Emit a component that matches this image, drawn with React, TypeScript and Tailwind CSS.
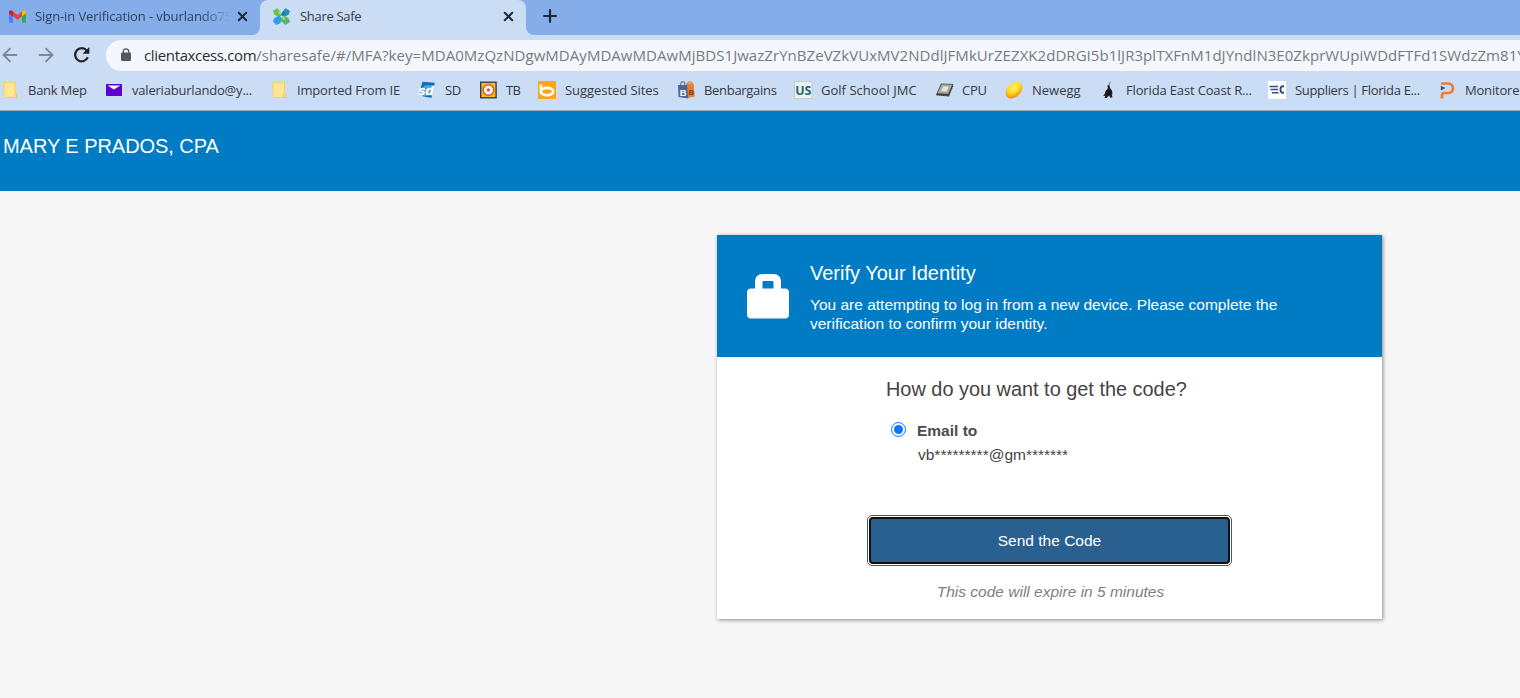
import React from 'react';
import { ArrowLeft, ArrowRight, Plus, X } from 'lucide-react';

const FolderIcon = () => (
  <svg width="18" height="18" viewBox="0 0 18 18">
    <path d="M3 1.5h11.5v11l1.200.6v3.400H3z" fill="#ffe694" stroke="#f3cf63" strokeWidth="0.9" />
    <path d="M13.400 16.400v-3l2.200-.2v3.200z" fill="#fff1b8" stroke="#eabb40" strokeWidth="0.8" />
  </svg>
);

const MailIcon = () => (
  <svg width="18" height="18" viewBox="0 0 18 18">
    <rect x="1" y="3" width="16" height="12" rx="0.8" fill="#5f01d1" />
    <path d="M2.600 4.600h12.800L9 8.600z" fill="#fff" />
  </svg>
);

const SdIcon = () => (
  <svg width="18" height="18" viewBox="0 0 18 18">
    <path d="M4.500 0.800l12.300 1-3.300 15-7.500-1L1 13z" fill="#0870bd" />
    <path d="M1 11l5.500-6.500 8-.5-1.500 9-6 2.500L1 14.500z" fill="#fff" fillOpacity="0.350" />
    <text x="0" y="13.500" fontSize="13.500" fontWeight="bold" fontStyle="italic" fill="#fff" stroke="#fff" strokeWidth="0.300" fontFamily="Liberation Sans, sans-serif" textLength="15.500" lengthAdjust="spacingAndGlyphs">sd</text>
  </svg>
);

const TbIcon = () => (
  <svg width="18" height="18" viewBox="0 0 18 18">
    <rect x="1.700" y="1.200" width="15.400" height="15.600" fill="#f9bd10" stroke="#263466" strokeWidth="1.300" />
    <circle cx="9.400" cy="9" r="5.300" fill="#fff" stroke="#e5532d" strokeWidth="1.500" />
    <circle cx="9.400" cy="9" r="1.700" fill="#e5532d" />
  </svg>
);

const BingIcon = () => (
  <svg width="18" height="18" viewBox="0 0 18 18">
    <rect width="18" height="18" fill="#fda51c" />
    <path d="M2.900 3.600v7" stroke="#fff" strokeWidth="2.600" />
    <ellipse cx="9" cy="10.500" rx="6.200" ry="3.600" fill="none" stroke="#fff" strokeWidth="2.600" />
  </svg>
);

const BagsIcon = () => (
  <svg width="18" height="18" viewBox="0 0 18 18">
    <path d="M10.500 3c0-3 4.500-3 4.500 0" fill="none" stroke="#d98143" strokeWidth="1.200" />
    <path d="M9 2.500h7.500l1.300 13L10 17z" fill="#ef7c2d" />
    <path d="M3.500 4.500c0-5 4.500-5 4.500 0" fill="none" stroke="#6b82ad" strokeWidth="1.300" />
    <path d="M1 4h9l1.300 13.500L1.500 16z" fill="#4a6598" />
    <text x="2.800" y="14.500" fontSize="9.500" fontWeight="bold" fill="#fff" fontFamily="Liberation Sans, sans-serif">B</text>
    <text x="11.500" y="13.500" fontSize="7.500" fontWeight="bold" fill="#743b2c" fontFamily="Liberation Sans, sans-serif">B</text>
  </svg>
);

const UsIcon = () => (
  <svg width="19" height="18" viewBox="0 0 19 18">
    <rect x="0.500" y="0.500" width="17.500" height="17" fill="#eef0ec" stroke="#b9cfd3" />
    <text x="1.200" y="14.200" fontSize="13" fontWeight="bold" fill="#1f6577" fontFamily="Open Sans, sans-serif" textLength="16.200" lengthAdjust="spacingAndGlyphs">US</text>
  </svg>
);

const CpuIcon = () => (
  <svg width="19" height="18" viewBox="0 0 19 18">
    <path d="M6 2.500l12.500.6-4.500 12.400L.8 14.200z" fill="#4c5148" />
    <path d="M6.800 3.200l10.500.6-4 9-10.800-.6z" fill="#a6aa9f" />
    <path d="M8.200 5.200l5.800.3-2.200 5-5.800-.3z" fill="#dfe2dd" />
    <path d="M1.500 13.300l11.800 1.200 4.700-10" fill="none" stroke="#343831" strokeWidth="1.300" strokeDasharray="1.400 0.700" />
  </svg>
);

const EggIcon = () => (
  <svg width="18" height="18" viewBox="0 0 18 18">
    <defs>
      <radialGradient id="egg" cx="0.600" cy="0.350" r="0.650">
        <stop offset="0" stopColor="#fff46b" />
        <stop offset="0.600" stopColor="#ffd61e" />
        <stop offset="1" stopColor="#f5880f" />
      </radialGradient>
    </defs>
    <ellipse cx="9" cy="9" rx="9.800" ry="6.800" transform="rotate(-45 9 9)" fill="url(#egg)" />
  </svg>
);

const HeronIcon = () => (
  <svg width="18" height="18" viewBox="0 0 18 18">
    <path d="M11.500 1c-1.300.8-1.500 2-1.500 4" fill="none" stroke="#7b8498" strokeWidth="1.200" />
    <path d="M8.500 4.500c1.500-.8 2.500.3 2.300 1.600-.2 1.300 2 2.400 2.400 4.400.2 1.200-.3 2 .6 2.700l-1.100.4.800 2.900H11l-.8-2-1.700 1.200-.6 1.300H5.600l.8-2.200-2.200.2 2-3c-.4-2.500 2.600-3.300 2.600-5z" fill="#181b21" />
  </svg>
);

const EcIcon = () => (
  <svg width="18" height="18" viewBox="0 0 18 18">
    <rect width="18" height="18" fill="#fff" />
    <path d="M1.500 5.500h8.500M2.500 8.500H10M4 11.800h6.500" stroke="#29508d" strokeWidth="1.600" />
    <path d="M16 5.300h-1c-3.400 0-3.400 6.500 0 6.500h1" fill="none" stroke="#29508d" strokeWidth="1.900" />
  </svg>
);

const PIcon = () => (
  <svg width="18" height="18" viewBox="0 0 18 18">
    <path d="M3 2.500h7c6.600 0 6.600 9.500 0 9.500H6c-1.700 0-2 .8-2 2v3.500" fill="none" stroke="#f37b2d" strokeWidth="2.700" />
    <path d="M2.800 4.700l4.700 2.400-4.700 2.400z" fill="#45516a" />
  </svg>
);

const GmailIcon = () => (
  <svg width="17" height="13" viewBox="0 0 17 13">
    <path d="M0 2v9.500c0 .8.5 1.300 1.200 1.300H4V5z" fill="#4285f4" />
    <path d="M17 2v9.500c0 .8-.5 1.300-1.200 1.300H13V5z" fill="#34a853" />
    <path d="M4 1.500l4.500 3.600L13 1.500v4.800L8.500 9.800 4 6.300z" fill="#ea4335" />
    <path d="M0 2.200C0 .2 2.200-.4 4 1.500v4.800L0 3.500z" fill="#c5221f" />
    <path d="M17 2.200c0-2-2.200-2.600-4-.7v4.800l4-2.800z" fill="#fbbc04" />
  </svg>
);

const ShareSafeIcon = () => (
  <svg width="19" height="19" viewBox="0 0 19 19">
    <path d="M5.500 1.200L.8 3.800l1.600 4L7 10l3-3z" fill="#6cc24f" />
    <path d="M13.500 1.200L18.200 4l-1.600 3.800L11 10.500 8 7.500z" fill="#2791bd" />
    <path d="M7 8.500l3.500 3-2 4.500-4.200 2L.8 14.500 2.600 11z" fill="#2aa1e0" />
    <path d="M11.500 8.500l4.600 2.300 2 4-4.600 3.200-5-4.500z" fill="#4fb870" />
    <path d="M7 4.500l5.500 8" stroke="#a5da70" strokeWidth="2.200" />
    <path d="M12.500 5.500L9 9" stroke="#1675a4" strokeWidth="2" />
    <path d="M9.500 8.500v2" stroke="#e8f4fa" strokeWidth="0.900" />
  </svg>
);

const ReloadIcon = () => (
  <svg width="18" height="18" viewBox="0 0 18 18">
    <path d="M14.800 11.300A6.600 6.600 0 1 1 13.700 4.400" fill="none" stroke="#202124" strokeWidth="2.200" />
    <path d="M16.300 1v6.700H9.600z" fill="#202124" />
  </svg>
);

const bookmarks = [
  { label: 'Bank Mep', Icon: FolderIcon, width: 'w-[104px]', tracking: 'tracking-[-0.25px]' },
  { label: 'valeriaburlando@y...', Icon: MailIcon, width: 'w-[165px]', tracking: 'tracking-[-0.2px]' },
  { label: 'Imported From IE', Icon: FolderIcon, width: 'w-[148px]', tracking: 'tracking-[-0.2px]' },
  { label: 'SD', Icon: SdIcon, width: 'w-[61px]', tracking: 'tracking-[-0.3px]' },
  { label: 'TB', Icon: TbIcon, width: 'w-[59px]', tracking: 'tracking-[-0.6px]' },
  { label: 'Suggested Sites', Icon: BingIcon, width: 'w-[139px]', tracking: 'tracking-[-0.05px]' },
  { label: 'Benbargains', Icon: BagsIcon, width: 'w-[117px]', tracking: 'tracking-[-0.3px]' },
  { label: 'Golf School JMC', Icon: UsIcon, width: 'w-[141px]', tracking: 'tracking-[0.02px]' },
  { label: 'CPU', Icon: CpuIcon, width: 'w-[70px]', tracking: 'tracking-[-0.3px]' },
  { label: 'Newegg', Icon: EggIcon, width: 'w-[94px]', tracking: 'tracking-[0px]' },
  { label: 'Florida East Coast R...', Icon: HeronIcon, width: 'w-[169px]', tracking: 'tracking-[-0.15px]' },
  { label: 'Suppliers | Florida E...', Icon: EcIcon, width: 'w-[170px]', tracking: 'tracking-[-0.33px]' },
  { label: 'Monitore', Icon: PIcon, width: 'w-[100px]', tracking: 'tracking-[-0.2px]' },
];

function TabStrip() {
  return (
    <div className="flex h-[35px] bg-[#cbdcf5]">
      <div className="flex w-[260px] items-center rounded-br-lg bg-[#85ade9] pb-[3px] pl-[9px]">
        <GmailIcon />
        <div className="ml-[9px] w-[195px] overflow-hidden whitespace-nowrap bg-gradient-to-r from-[#2c3c58] from-85% to-[#85ade9] bg-clip-text pt-px text-[13px] tracking-[-0.1px] text-transparent">
          Sign-in Verification - vburlando75
        </div>
        <X className="ml-[5px] h-[15px] w-[15px] text-[#1d2634]" strokeWidth={3.2} />
      </div>
      <div className="w-[266px] bg-[#85ade9]">
        <div className="flex h-full items-center rounded-t-lg bg-[#cbdcf5] pb-[3px] pl-[12px]">
          <ShareSafeIcon />
          <span className="ml-[9px] w-[201px] pt-px text-[13px] tracking-[-0.3px] text-[#343b47]">Share Safe</span>
          <X className="h-[15px] w-[15px] text-[#242933]" strokeWidth={3.2} />
        </div>
      </div>
      <div className="flex flex-1 items-center rounded-bl-lg bg-[#85ade9] pb-[3px] pl-[14px]">
        <Plus className="h-5 w-5 text-[#1d2634]" strokeWidth={2.6} />
      </div>
    </div>
  );
}

function AddressBar() {
  return (
    <div className="flex h-10 items-center bg-[#cbdcf5]">
      <ArrowLeft className="ml-[-1px] h-[22px] w-[22px] text-[#7e8799]" strokeWidth={2} />
      <ArrowRight className="ml-[14px] h-[22px] w-[22px] text-[#7e8799]" strokeWidth={2} />
      <div className="ml-[16px]">
        <ReloadIcon />
      </div>
      <div className="ml-[15px] flex h-[31px] flex-1 items-center overflow-hidden rounded-l-full bg-[#f4f8fe] pl-[15px]">
        <svg width="10" height="14" viewBox="0 0 10 14" className="shrink-0">
          <rect x="0" y="4.500" width="10" height="8.500" rx="1" fill="#54575d" />
          <path d="M2.300 5.500v-2a2.700 2.700 0 0 1 5.400 0v2" fill="none" stroke="#54575d" strokeWidth="1.300" />
        </svg>
        <span className="ml-[13px] whitespace-nowrap text-[15px] tracking-[0.045px] text-[#777a80]">
          <span className="tracking-[-0.35px] text-[#2b2d31]">clientaxcess.com</span>
          /sharesafe/#/MFA?key=MDA0MzQzNDgwMDAyMDAwMDAwMjBDS1JwazZrYnBZeVZkVUxMV2NDdlJFMkUrZEZXK2dDRGI5b1lJR3plTXFnM1dJYndlN3E0ZkprWUpiWDdFTFd1SWdzZm81Y
        </span>
      </div>
    </div>
  );
}

function BookmarksBar() {
  return (
    <div className="flex h-9 overflow-hidden border-b border-[#9eabbd] bg-[#cbdcf5] pb-[5px] pl-px">
      {bookmarks.map(({ label, Icon, width, tracking }) => (
        <div key={label} className={`flex shrink-0 items-center ${width}`}>
          <div className="w-[27px] shrink-0">
            <Icon />
          </div>
          <span className={`whitespace-nowrap pt-px text-[13px] text-[#343a45] ${tracking}`}>{label}</span>
        </div>
      ))}
    </div>
  );
}

function VerifyCard() {
  return (
    <div className="ml-[717px] mt-[44px] h-[384px] w-[665px] bg-white shadow-[1px_1px_4px_rgba(0,0,0,0.45)]">
      <div className="flex h-[122px] bg-[#007bc4] pl-[30px] text-white">
        <svg width="42" height="45" viewBox="0 0 42 45" className="mt-[39px] shrink-0">
          <path
            fillRule="evenodd"
            d="M8 14.500V7a7 7 0 0 1 7-7h12a7 7 0 0 1 7 7v7.500h4a4 4 0 0 1 4 4v22a4 4 0 0 1-4 4H4a4 4 0 0 1-4-4v-22a4 4 0 0 1 4-4zm7.500 0h11V8a1 1 0 0 0-1-1h-9a1 1 0 0 0-1 1z"
            fill="#fff"
          />
        </svg>
        <div className="ml-[21px] pt-[26px]">
          <h2 className="text-[20px] leading-6">Verify Your Identity</h2>
          <p className="mt-[10px] whitespace-nowrap text-[15.5px] leading-[19px]">
            You are attempting to log in from a new device. Please complete the
            <br />
            verification to confirm your identity.
          </p>
        </div>
      </div>
      <div className="pl-[150px] text-[#444]">
        <h3 className="ml-[19px] pt-[20px] text-[19.9px] leading-6">How do you want to get the code?</h3>
        <label className="ml-[24px] mt-[20px] flex h-5 items-start text-[15.5px] font-bold leading-5 text-[#4b4b4b]">
          <span className="mr-[11px] mt-px flex h-[15px] w-[15px] items-center justify-center rounded-full border border-[#0a75ff] bg-white">
            <span className="h-[9px] w-[9px] rounded-full bg-[#0a75ff]" />
          </span>
          Email to
        </label>
        <div className="ml-[51px] mt-[4px] text-[15.5px] leading-5">vb*********@gm*******</div>
        <button className="mt-[50px] flex h-[51px] w-[365px] items-center justify-center rounded-[5px] border border-[#2a608f] bg-white p-px text-[15.5px] text-white">
          <span className="flex h-full w-full items-center justify-center rounded-[4px] border-2 border-[#101010] bg-[#2a6090] pt-px">
            Send the Code
          </span>
        </button>
        <p className="mt-[16px] w-[367px] text-center text-[15.5px] italic leading-5 text-[#808080]">
          This code will expire in 5 minutes
        </p>
      </div>
    </div>
  );
}

export default function App() {
  return (
    <div className="h-[698px] w-[1520px] overflow-hidden bg-[#f7f7f7] font-['Liberation_Sans',sans-serif]">
      <div className="font-['Open_Sans',sans-serif]">
        <TabStrip />
        <AddressBar />
        <BookmarksBar />
      </div>
      <header className="h-20 bg-[#007bc4] pl-[3px] pt-[23px] text-[20px] leading-6 tracking-[-0.05px] text-white">
        MARY E PRADOS, CPA
      </header>
      <main className="flex">
        <VerifyCard />
      </main>
    </div>
  );
}
